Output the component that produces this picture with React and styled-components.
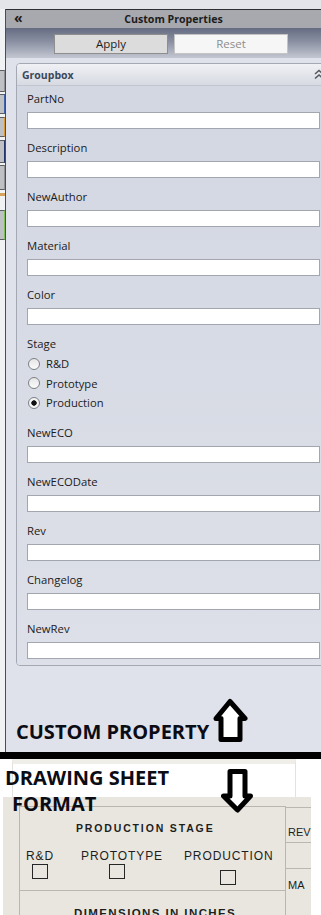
import React from 'react'
import styled, { createGlobalStyle } from 'styled-components'

//#region styles
const GlobalStyle = createGlobalStyle`
  html, body {
    margin: 0;
    padding: 0;
    background: #fff;
  }
  body {
    width: 321px;
    height: 915px;
    overflow: hidden;
    font-family: "Open Sans", "Noto Sans", sans-serif;
  }
  * {
    box-sizing: border-box;
  }
`
const Page = styled.div`
  width: 321px;
  height: 915px;
  display: flex;
  flex-direction: column;
  overflow: hidden;
`
const TaskPane = styled.div`
  height: 752px;
  flex-shrink: 0;
  display: flex;
  flex-direction: column;
  background: #e3e5e9;
`
const TopGap = styled.div`
  height: 9px;
  flex-shrink: 0;
`
const PaneRow = styled.div`
  flex: 1;
  display: flex;
  min-height: 0;
`
const SideStrip = styled.div`
  width: 6px;
  flex-shrink: 0;
  background: #f1f2f4;
  border-right: 1px solid #4b4d52;
  display: flex;
  flex-direction: column;
  padding-top: 61px;
`
const StripButton = styled.div`
  width: 5px;
  height: ${(p) => p.h}px;
  margin-top: ${(p) => p.gap}px;
  background: ${(p) => (p.tick ? p.accent : '#bfc0c4')};
  border-top: ${(p) => (p.tick ? 'none' : '1px solid #5b5c60')};
  border-bottom: ${(p) => (p.tick ? 'none' : '1px solid #5b5c60')};
  border-right: 1px solid ${(p) => p.accent};
`
const MainColumn = styled.div`
  flex: 1;
  display: flex;
  flex-direction: column;
  min-width: 0;
`
const TitleBar = styled.div`
  height: 19px;
  flex-shrink: 0;
  display: flex;
  align-items: center;
  padding-left: 8px;
  background: #a8a9ae;
  border-top: 1px solid #2e2f33;
  color: #1c1c1c;
`
const Collapse = styled.span`
  font-size: 14px;
  font-weight: 700;
  line-height: 14px;
  width: 10px;
  margin-top: -2px;
`
const Title = styled.span`
  flex: 1;
  text-align: center;
  font-size: 10.6px;
  font-weight: 700;
  padding-left: 2px;
`
const ButtonBar = styled.div`
  height: 30px;
  flex-shrink: 0;
  display: flex;
  gap: 6px;
  padding: 6px 0 0 48px;
  background: linear-gradient(#656c81, #8a90a2 45%, #c3c7d2);
`
const BarButton = styled.button`
  width: 114px;
  height: 20px;
  padding: 0;
  font-family: inherit;
  font-size: 11.5px;
  line-height: 18px;
  color: ${(p) => (p.disabled ? '#8d8d8d' : '#1d1d1d')};
  background: ${(p) => (p.disabled ? '#f6f6f6' : '#dcdcdc')};
  border: 1px solid ${(p) => (p.disabled ? '#c4c4c4' : '#8e8e8e')};
  border-radius: 0;
`
const Content = styled.div`
  flex: 1;
  display: flex;
  flex-direction: column;
  padding: 5px 0 0 10px;
  background: #dfe2ea;
`
const GroupBox = styled.section`
  width: 310px;
  border: 1px solid #a4a8b2;
  border-radius: 4px 4px 0 4px;
  overflow: hidden;
`
const GroupHeader = styled.div`
  height: 22px;
  display: flex;
  align-items: center;
  justify-content: space-between;
  padding: 0 1px 0 5px;
  background: linear-gradient(#f0f1f5, #d7dae2);
  border-bottom: 1px solid #c3c6ce;
  font-size: 10.5px;
  font-weight: 700;
  color: #3c475a;
`
const GroupBody = styled.div`
  padding: 5px 5px 6px 10px;
  background: linear-gradient(#d3d7e2, #dde0e8);
`
const Field = styled.div`
  margin-bottom: ${(p) => (p.last ? 0 : 11)}px;
`
const Label = styled.div`
  height: 16px;
  margin-bottom: 5px;
  font-size: 11.3px;
  line-height: 16px;
  color: #1b1b1b;
`
const TextBox = styled.div`
  height: 17px;
  background: #fff;
  border: 1px solid #a2a6ae;
`
const RadioGroup = styled.div`
  margin: -3px 0 12px;
`
const RadioRow = styled.label`
  height: 19.5px;
  display: flex;
  align-items: center;
  gap: 6px;
  padding-left: 1px;
  font-size: 11.2px;
  color: #1b1b1b;
`
const RadioDot = styled.span`
  width: 12px;
  height: 12px;
  border-radius: 50%;
  border: 1px solid #7d8086;
  background: ${(p) =>
    p.checked
      ? 'radial-gradient(circle, #111 0 2.4px, #f4f4f4 3px)'
      : 'linear-gradient(#e6e6e6, #fbfbfb)'};
`
const Callout = styled.div`
  flex: 1;
  display: flex;
  align-items: flex-end;
  gap: 4px;
  padding-bottom: 10px;
`
const CalloutText = styled.span`
  font-size: 20px;
  font-weight: 700;
  line-height: 20px;
  color: #0b0c14;
`
const Divider = styled.div`
  height: 7px;
  flex-shrink: 0;
  background: #000;
`
const SheetSection = styled.div`
  position: relative;
  flex: 1;
  display: flex;
  flex-direction: column;
  background: #fff;
`
const SheetGap = styled.div`
  height: 38px;
  flex-shrink: 0;
  margin: 0 25px 0 12px;
  border-top: 5px solid #efeee9;
  border-left: 1px solid #e4e2dc;
  border-right: 1px solid #e4e2dc;
`
const Drawing = styled.div`
  flex: 1;
  width: 308px;
  margin-left: 3px;
  display: grid;
  grid-template-columns: 17px 266px 25px;
  background: #e8e6df;
  font-family: "Liberation Sans", Arial, sans-serif;
  color: #1e1e1e;
`
const Margin = styled.div`
  border-right: 1px solid #b9b7b0;
`
const StageTable = styled.div`
  margin-top: 9px;
  border-top: 1px solid #b9b7b0;
  border-right: 1px solid #b9b7b0;
`
const TableTitle = styled.div`
  padding: 15px 0 0 56px;
  font-size: 10.5px;
  font-weight: 700;
  line-height: 12px;
  letter-spacing: 1.85px;
`
const StageRow = styled.div`
  display: flex;
  align-items: flex-start;
  height: 56px;
  padding: 15px 0 0 6px;
`
const StageOption = styled.div`
  display: flex;
  flex-direction: column;
  align-items: center;
  margin-left: ${(p) => p.offset}px;
  font-size: 12px;
  line-height: 14px;
  letter-spacing: 0.9px;
`
const CheckBox = styled.span`
  width: 16px;
  height: 15px;
  margin-top: ${(p) => p.drop + 1}px;
  margin-left: ${(p) => p.shift}px;
  border: 1px solid #262626;
`
const TableFoot = styled.div`
  border-top: 1px solid #b9b7b0;
  padding: 15px 0 0 54px;
  font-size: 11.5px;
  font-weight: 700;
  letter-spacing: 1.4px;
  line-height: 14px;
`
const RightColumn = styled.div`
  display: flex;
  flex-direction: column;
  overflow: hidden;
`
const RightCell = styled.div`
  height: ${(p) => p.h}px;
  border-bottom: ${(p) => (p.open ? 'none' : '1px solid #b9b7b0')};
  padding: ${(p) => p.pad}px 0 0 2px;
  font-size: 11px;
  line-height: 12px;
  white-space: nowrap;
`
const Annotation = styled.div`
  position: absolute;
  left: 5px;
  top: 6px;
  font-family: "Open Sans", sans-serif;
  font-size: 20px;
  font-weight: 700;
  line-height: 26px;
  color: #0b0c14;
  > span {
    display: block;
    padding-left: 7px;
  }
`
const DownArrowMark = styled.svg`
  position: absolute;
  left: 221px;
  top: 10px;
`
//#endregion

const sideButtons = [
  { h: 22, gap: 0, accent: '#8f9094' },
  { h: 20, gap: 2, accent: '#3f62ad' },
  { h: 20, gap: 3, accent: '#d79a3a' },
  { h: 23, gap: 3, accent: '#23356a' },
  { h: 25, gap: 2, accent: '#8f9094' },
  { h: 3, gap: 3, accent: '#d7a25a', tick: true },
  { h: 30, gap: 14, accent: '#7fbf58' },
]

const fieldsBefore = ['PartNo', 'Description', 'NewAuthor', 'Material', 'Color']
const fieldsAfter = ['NewECO', 'NewECODate', 'Rev', 'Changelog', 'NewRev']
const stages = [
  { name: 'R&D', checked: false },
  { name: 'Prototype', checked: false },
  { name: 'Production', checked: true },
]

function UpArrow() {
  return (
    <svg width="36" height="44" viewBox="0 0 36 44">
      <polygon
        points="17,3.5 32,20.5 27,20.5 27,41.5 8,41.5 8,20.5 3,20.5"
        fill="#fff"
        stroke="#000"
        strokeWidth="5"
        strokeLinejoin="round"
      />
    </svg>
  )
}

function ChevronsUp() {
  return (
    <svg width="10" height="11" viewBox="0 0 10 11">
      <path
        d="M1 5 L5 1.5 L9 5 M1 9.5 L5 6 L9 9.5"
        fill="none"
        stroke="#55585f"
        strokeWidth="1.6"
      />
    </svg>
  )
}

function PropertyField({ label, last }) {
  return (
    <Field last={last}>
      <Label>{label}</Label>
      <TextBox />
    </Field>
  )
}

function App() {
  return (
    <Page>
      <GlobalStyle />
      <TaskPane>
        <TopGap />
        <PaneRow>
          <SideStrip>
            {sideButtons.map((b, i) => (
              <StripButton key={i} {...b} />
            ))}
          </SideStrip>
          <MainColumn>
            <TitleBar>
              <Collapse>«</Collapse>
              <Title>Custom Properties</Title>
            </TitleBar>
            <ButtonBar>
              <BarButton>Apply</BarButton>
              <BarButton disabled>Reset</BarButton>
            </ButtonBar>
            <Content>
              <GroupBox>
                <GroupHeader>
                  <span>Groupbox</span>
                  <ChevronsUp />
                </GroupHeader>
                <GroupBody>
                  {fieldsBefore.map((f) => (
                    <PropertyField key={f} label={f} />
                  ))}
                  <Label>Stage</Label>
                  <RadioGroup>
                    {stages.map((s) => (
                      <RadioRow key={s.name}>
                        <RadioDot checked={s.checked} />
                        {s.name}
                      </RadioRow>
                    ))}
                  </RadioGroup>
                  {fieldsAfter.map((f, i) => (
                    <PropertyField
                      key={f}
                      label={f}
                      last={i === fieldsAfter.length - 1}
                    />
                  ))}
                </GroupBody>
              </GroupBox>
              <Callout>
                <CalloutText>CUSTOM PROPERTY</CalloutText>
                <UpArrow />
              </Callout>
            </Content>
          </MainColumn>
        </PaneRow>
      </TaskPane>
      <Divider />
      <SheetSection>
        <SheetGap />
        <Drawing>
          <Margin />
          <StageTable>
            <TableTitle>PRODUCTION STAGE</TableTitle>
            <StageRow>
              <StageOption offset={0}>
                R&amp;D
                <CheckBox drop={0} shift={0} />
              </StageOption>
              <StageOption offset={27}>
                PROTOTYPE
                <CheckBox drop={0} shift={-11} />
              </StageOption>
              <StageOption offset={21}>
                PRODUCTION
                <CheckBox drop={6} shift={-1} />
              </StageOption>
            </StageRow>
            <TableFoot>DIMENSIONS IN INCHES</TableFoot>
          </StageTable>
          <RightColumn>
            <RightCell h={11} pad={0} />
            <RightCell h={35} pad={18}>REV</RightCell>
            <RightCell h={26} pad={0} />
            <RightCell h={40} pad={10} open>MA</RightCell>
          </RightColumn>
        </Drawing>
        <Annotation>
          DRAWING SHEET
          <span>FORMAT</span>
        </Annotation>
        <DownArrowMark width="32" height="44" viewBox="0 0 32 44">
          <polygon
            points="9,2.5 24,2.5 24,27 29.5,27 16.5,41 2.5,27 9,27"
            fill="#fff"
            stroke="#000"
            strokeWidth="5"
            strokeLinejoin="round"
          />
        </DownArrowMark>
      </SheetSection>
    </Page>
  )
}

export default App
